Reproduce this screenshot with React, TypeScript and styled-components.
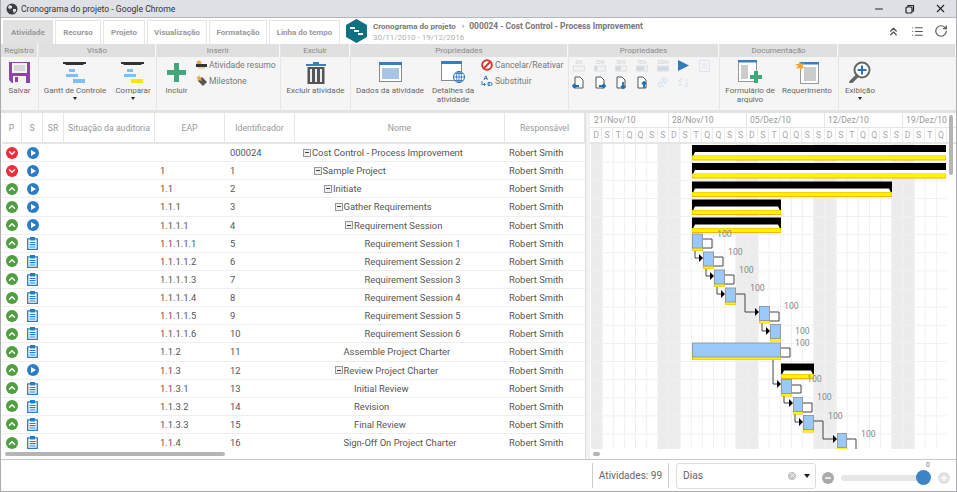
import React from "react";
import styled, { createGlobalStyle } from "styled-components";
import { ChevronsUp, List, RotateCw, Minus, X, Plus as PlusGlyph, ChevronUp, ChevronDown } from "lucide-react";

const Global = createGlobalStyle`
  html, body { margin: 0; padding: 0; height: 100%; overflow: hidden; background: #fff; }
  #root { height: 100%; }
  * { box-sizing: border-box; }
`;

const Shell = styled.div`
  width: 957px;
  height: 492px;
  display: flex;
  flex-direction: column;
  border: 1px solid #a9abad;
  border-top: 0;
  font-family: Roboto, "Liberation Sans", Arial, sans-serif;
  font-size: 9.4px;
  color: #666;
  overflow: hidden;
`;

const TitleBar = styled.div`
  height: 18px;
  flex: none;
  display: flex;
  align-items: center;
  background: #dee1e6;
  border-bottom: 1px solid #b5b7ba;
  padding-left: 5px;
  color: #333;
  font-size: 8.6px;
`;
const TitleText = styled.span`
  margin-left: 3px;
  flex: 1;
`;
const WinButton = styled.div`
  width: 31px;
  display: flex;
  justify-content: center;
  align-items: center;
  color: #222;
`;

const TopBar = styled.div`
  height: 26px;
  flex: none;
  display: flex;
  align-items: flex-end;
  background: #fff;
  padding-left: 2px;
`;
const Tab = styled.div<{ $active?: boolean; $w: number }>`
  width: ${(p) => p.$w}px;
  height: 24px;
  margin-right: 2px;
  display: flex;
  align-items: center;
  justify-content: center;
  font-weight: 700;
  font-size: 8px;
  color: #999;
  background: ${(p) => (p.$active ? "#e2e2e2" : "#fff")};
  border: 1px solid ${(p) => (p.$active ? "#e2e2e2" : "#e6e6e6")};
  border-bottom: 0;
  white-space: nowrap;
`;
const ProjectInfo = styled.div`
  flex: 1;
  align-self: stretch;
  display: flex;
  align-items: center;
  padding: 0 3px 0 4px;
`;
const ProjectText = styled.div`
  margin-left: 6px;
  flex: 1;
  line-height: 11px;
  padding-top: 1px;
`;
const Crumb = styled.div`
  font-weight: 700;
  font-size: 8.4px;
  color: #777;
  white-space: nowrap;
`;
const CrumbRoot = styled.span`
  font-size: 8px;
`;
const CrumbSep = styled.span`
  font-weight: 400;
  margin: 0 5px 0 6px;
`;
const Dates = styled.div`
  font-size: 8px;
  color: #b0b0b0;
`;
const TopAction = styled.div`
  width: 24px;
  display: flex;
  justify-content: center;
  color: #555;
`;

const Ribbon = styled.div`
  height: 69px;
  flex: none;
  display: flex;
  background: #f5f5f5;
  border-bottom: 3px solid #e2e2e2;
`;
const Group = styled.div<{ $w: number }>`
  width: ${(p) => p.$w}px;
  flex: none;
  display: flex;
  flex-direction: column;
  border-right: 1px solid #e6e6e6;
`;
const GroupTitle = styled.div`
  height: 13px;
  background: #e0e0e0;
  border-right: 1px solid #f8f8f8;
  text-align: center;
  line-height: 13px;
  font-size: 8px;
  color: #8a8a8a;
`;
const GroupBody = styled.div`
  flex: 1;
  display: flex;
  justify-content: flex-start;
`;
const BigButton = styled.div<{ $w: number }>`
  width: ${(p) => p.$w}px;
  flex: none;
  display: flex;
  flex-direction: column;
  align-items: center;
  padding-top: 3px;
  text-align: center;
  font-size: 8px;
  line-height: 9px;
  color: #666;
`;
const BigIcon = styled.div`
  height: 24px;
  display: flex;
  align-items: center;
  justify-content: center;
  svg { display: block; }
`;
const BigLabel = styled.div`
  margin-top: 2px;
  white-space: pre;
`;
const Caret = styled.div`
  width: 0;
  height: 0;
  margin-top: 2px;
  border-left: 2.5px solid transparent;
  border-right: 2.5px solid transparent;
  border-top: 3px solid #222;
`;
const SmallStack = styled.div<{ $w: number; $pad?: number }>`
  width: ${(p) => p.$w}px;
  flex: none;
  display: flex;
  flex-direction: column;
  gap: 4px;
  padding-top: 2px;
  padding-left: ${(p) => p.$pad || 0}px;
`;
const SmallItem = styled.div`
  height: 12px;
  display: flex;
  align-items: center;
  gap: 2px;
  font-size: 8.6px;
  color: #777;
  white-space: nowrap;
`;
const IconGrid = styled.div`
  display: grid;
  grid-template-columns: repeat(7, 21px);
  grid-auto-rows: 17px;
  justify-items: center;
  align-items: center;
  margin-left: -1px;
`;

const Main = styled.div`
  flex: 1;
  min-height: 0;
  display: flex;
`;
const GridPane = styled.div`
  width: 584px;
  flex: none;
  padding-left: 1px;
  display: flex;
  flex-direction: column;
`;
const Cols = "20px 21px 21px 91px 70px 70px 210px 80px";
const HeadRow = styled.div`
  height: 31px;
  flex: none;
  display: grid;
  grid-template-columns: ${Cols};
  border-bottom: 2px solid #e6e6e6;
`;
const HeadCell = styled.div`
  display: flex;
  align-items: center;
  justify-content: center;
  border-right: 1px solid #e6e6e6;
  font-size: 8.7px;
  color: #999;
  white-space: nowrap;
`;
const Rows = styled.div`
  height: 305px;
  overflow: hidden;
`;
const Row = styled.div`
  height: 18.125px;
  display: grid;
  grid-template-columns: ${Cols};
  border-bottom: 1px solid #eeeeee;
  color: #555;
  font-size: 9.4px;
  align-items: center;
`;
const IconCell = styled.div`
  display: flex;
  justify-content: center;
`;
const TextCell = styled.div<{ $pad: number }>`
  padding-left: ${(p) => p.$pad}px;
  white-space: nowrap;
`;
const NameCell = styled.div<{ $depth: number }>`
  display: flex;
  align-items: center;
  padding-left: ${(p) => 8 + p.$depth * 10.5}px;
  white-space: nowrap;
`;
const Expander = styled.span<{ $on: boolean }>`
  width: 8px;
  height: 8px;
  margin-right: 1px;
  flex: none;
  border: 1px solid ${(p) => (p.$on ? "#999" : "transparent")};
  background: ${(p) => (p.$on ? "linear-gradient(#444, #444) center / 4px 1px no-repeat, #efefef" : "none")};
`;
const HScroll = styled.div<{ $left: number }>`
  height: 10px;
  flex: none;
  padding: 3px 0 0 ${(p) => p.$left}px;
`;
const HThumb = styled.div<{ $w: number }>`
  width: ${(p) => p.$w}px;
  height: 4px;
  border-radius: 2px;
  background: #b5b5b5;
`;
const Splitter = styled.div`
  width: 5px;
  flex: none;
  background: #f2f2f2;
  border-left: 1px solid #ddd;
`;
const GanttPane = styled.div`
  flex: 1;
  min-width: 0;
  display: flex;
  flex-direction: column;
  position: relative;
  overflow: hidden;
`;
const MonthRow = styled.div`
  height: 15px;
  flex: none;
  display: flex;
  padding-left: 1px;
  border-bottom: 1px solid #e6e6e6;
`;
const Month = styled.div`
  width: 78px;
  flex: none;
  padding-left: 3px;
  line-height: 14px;
  font-size: 8.6px;
  color: #999;
  border-right: 1px solid #e6e6e6;
  white-space: nowrap;
`;
const DayRow = styled.div`
  height: 16px;
  flex: none;
  display: flex;
  padding-left: 1px;
  border-bottom: 2px solid #e6e6e6;
`;
const Day = styled.div`
  width: 11.14px;
  flex: none;
  text-align: center;
  line-height: 14px;
  font-size: 8.7px;
  color: #aaa;
  border-right: 1px solid #ececec;
`;
const GanttSvg = styled.svg`
  display: block;
  flex: none;
`;
const VThumb = styled.div`
  position: absolute;
  top: 2px;
  right: 3px;
  width: 4px;
  height: 60px;
  border-radius: 2px;
  background: #b5b5b5;
`;

const Footer = styled.div`
  height: 32px;
  flex: none;
  display: flex;
  align-items: center;
  border-top: 1px solid #c9c9c9;
  padding-left: 591px;
  background: #fff;
`;
const Count = styled.div`
  height: 25px;
  width: 77px;
  display: flex;
  align-items: center;
  justify-content: center;
  border-left: 1px solid #ccc;
  border-right: 1px solid #ccc;
  font-size: 10.1px;
  color: #666;
`;
const SelectBox = styled.div`
  width: 140px;
  height: 26px;
  margin-left: 7px;
  display: flex;
  align-items: center;
  padding: 0 5px 0 6px;
  border: 1px solid #ddd;
  border-radius: 3px;
  font-size: 10.2px;
  color: #666;
`;
const SelectText = styled.span`
  flex: 1;
`;
const ClearDot = styled.span`
  width: 8px;
  height: 8px;
  border-radius: 50%;
  background: #c4c4c4;
  margin-right: 8px;
  color: #fff;
  display: flex;
  align-items: center;
  justify-content: center;
`;
const DownTri = styled.span`
  width: 0;
  height: 0;
  border-left: 3.5px solid transparent;
  border-right: 3.5px solid transparent;
  border-top: 4px solid #222;
`;
const Zoom = styled.div`
  margin-left: 6px;
  display: flex;
  align-items: center;
  padding-top: 4px;
`;
const ZoomBtn = styled.div<{ $dim?: boolean }>`
  width: 12px;
  height: 12px;
  border-radius: 50%;
  background: ${(p) => (p.$dim ? "#e2e2e2" : "#aaa")};
  display: flex;
  align-items: center;
  justify-content: center;
  color: #fff;
`;
const Track = styled.div`
  width: 85px;
  height: 6px;
  margin: 0 12px 0 7px;
  border-radius: 3px;
  background: #e6e6e6;
  position: relative;
`;
const Thumb = styled.div`
  position: absolute;
  right: -5px;
  top: -5px;
  width: 15px;
  height: 15px;
  border-radius: 50%;
  background: #3d85c6;
`;
const ZoomValue = styled.div`
  position: absolute;
  right: -4px;
  top: -14px;
  font-size: 7px;
  color: #777;
`;

const Globe = () => (
  <svg width="12" height="12" viewBox="0 0 12 12">
    <circle cx="6" cy="6" r="5.5" fill="#3c4043" />
    <path d="M3 2l3 1 0 2-2 1-2-1zM7 6l3 0 0 2-2 2-1-2z" fill="#dee1e6" />
  </svg>
);
const Restore = () => (
  <svg width="10" height="10" viewBox="0 0 10 10" fill="none" stroke="#222" strokeWidth="1.2">
    <rect x="1" y="3" width="6" height="6" rx="1" />
    <path d="M3 3V1.5h5.5V7H7" />
  </svg>
);
const Hexagon = () => (
  <svg width="21" height="24" viewBox="0 0 21 24">
    <path d="M10.5 0L21 6v12l-10.500 6L0 18V6z" fill="#0e7080" />
    <path d="M4 8h5v2H4zM8 11h5v2H8zM12 14h5v2h-5z" fill="#fff" />
  </svg>
);
const Save = () => (
  <svg width="22" height="22" viewBox="0 0 22 22">
    <path d="M0 1h21v21H3l-3-3z" fill="#8e44ad" />
    <rect x="3" y="2" width="15" height="10" fill="#f2f2f2" />
    <path d="M5 5h11M5 7h11M5 9h11" stroke="#bbb" />
    <rect x="4" y="15" width="13" height="7" fill="#f2f2f2" />
    <rect x="6" y="16" width="3" height="5" fill="#8e44ad" />
  </svg>
);
const GanttIcon = ({ lastFill }: { lastFill: string }) => (
  <svg width="24" height="22" viewBox="0 0 24 22">
    <path d="M0 1h23v2h-2l-1 1H3L2 3H0z" fill="#333" />
    <rect x="6" y="8" width="6" height="3" fill="#7ec0f5" />
    <rect x="3" y="13" width="12" height="3" fill="#7ec0f5" />
    <rect x="10" y="18" width="12" height="4" fill={lastFill} />
  </svg>
);
const Plus = () => (
  <svg width="19" height="19" viewBox="0 0 19 19">
    <path d="M7 0h5v7h7v5h-7v7H7v-7H0V7h7z" fill="#41a87a" />
  </svg>
);
const SummaryIcon = () => (
  <svg width="11" height="10" viewBox="0 0 11 10">
    <circle cx="3" cy="3" r="2.500" fill="#e9a94a" />
    <path d="M0 4h11v3H0z" fill="#333" />
    <path d="M2 7h7v2H2z" fill="#e8d5a8" />
  </svg>
);
const MilestoneIcon = () => (
  <svg width="11" height="12" viewBox="0 0 11 12">
    <path d="M6 2l5 5-4 4-5-5z" fill="#555" />
    <path d="M3 0l1 2 2 0-1 2 1 2-3-1-2 1 1-2-2-2h2z" fill="#e9a94a" />
  </svg>
);
const Trash = () => (
  <svg width="20" height="23" viewBox="0 0 20 23">
    <path d="M0 3h20v2H0zM7 1h6v2H7z" fill="#3a7ebf" />
    <rect x="1.500" y="6" width="17" height="17" fill="#555" />
    <path d="M5 8v13M10 8v13M15 8v13" stroke="#eee" strokeWidth="2" />
  </svg>
);
const Form = () => (
  <svg width="23" height="20" viewBox="0 0 23 20">
    <rect x="0.500" y="0.500" width="22" height="19" fill="#fff" stroke="#888" />
    <rect x="0" y="0" width="23" height="3" fill="#3a7ebf" />
    <rect x="3" y="6" width="17" height="11" fill="#a8c4e6" />
  </svg>
);
const Details = () => (
  <svg width="24" height="22" viewBox="0 0 24 22">
    <rect x="0.500" y="0.500" width="20" height="19" fill="#fff" stroke="#888" />
    <rect x="0" y="0" width="21" height="3" fill="#3a7ebf" />
    <circle cx="18" cy="16" r="5.500" fill="#fff" stroke="#2a6fb5" />
    <path d="M12.500 16h11M18 10.500v11M14 12.500h8M14 19.500h8" stroke="#2a6fb5" strokeWidth="0.800" />
    <ellipse cx="18" cy="16" rx="2.500" ry="5.500" fill="none" stroke="#2a6fb5" strokeWidth="0.800" />
  </svg>
);
const Cancel = () => (
  <svg width="12" height="12" viewBox="0 0 12 12">
    <circle cx="6" cy="6" r="4.800" fill="#fff" stroke="#d0392b" strokeWidth="2" />
    <path d="M3 9l6-6" stroke="#d0392b" strokeWidth="2" />
  </svg>
);
const Replace = () => (
  <svg width="12" height="12" viewBox="0 0 12 12" fill="none" stroke="#2a6fb5" strokeWidth="0.900">
    <path d="M3 5l1.500-4h.5L6.500 5M3.500 3.500h2.500" />
    <path d="M7 7.500h2.500a1 1 0 0 1 0 3H7zM7 9h2" />
    <path d="M1 6v3.500h3M3 8l1.500 1.500L3 11" />
  </svg>
);
const Percent = ({ label, fill }: { label: string; fill: number }) => (
  <svg width="14" height="14" viewBox="0 0 14 14">
    <text x="7" y="4.500" fontSize="4.500" textAnchor="middle" fill="#ccc" fontFamily="Liberation Sans">{label}</text>
    <rect x="1.500" y="7" width="11" height="5" fill="#f2f2f2" stroke="#e0e0e0" />
    <rect x="2" y="7.500" width={10 * fill} height="4" fill="#cfd9e4" />
  </svg>
);
const DocArrow = ({ d }: { d: string }) => (
  <svg width="14" height="14" viewBox="0 0 14 14">
    <path d="M3 1h5l3 3v8H3z" fill="#fff" stroke="#555" />
    <path d={d} fill="none" stroke="#1f6db5" strokeWidth="1.800" />
  </svg>
);
const Play = () => (
  <svg width="11" height="11" viewBox="0 0 11 11">
    <path d="M0 0l11 5.500L0 11z" fill="#2f7bc4" />
  </svg>
);
const FadedClip = () => (
  <svg width="11" height="13" viewBox="0 0 11 13" fill="none" stroke="#dce6f0">
    <rect x="0.500" y="1.500" width="10" height="11" />
    <path d="M3 5h5M3 7h5M3 9h5" />
  </svg>
);
const FadedLink = ({ broken }: { broken?: boolean }) => (
  <svg width="11" height="11" viewBox="0 0 11 11" fill="none" stroke="#dce6f0" strokeWidth="1.500">
    <path d={broken ? "M1 9l2-2M8 4l2-2M4 1l-3 3 2 1M7 10l3-3-2-1" : "M4 7l3-3M1 8l2-3 3 4-3 1zM10 3L8 6 5 2l3-1z"} />
  </svg>
);
const FileForm = () => (
  <svg width="24" height="24" viewBox="0 0 24 24">
    <rect x="0.500" y="0.500" width="18" height="21" fill="#fff" stroke="#999" />
    <rect x="0" y="0" width="19" height="2.500" fill="#3a7ebf" />
    <rect x="3" y="5" width="7" height="14" fill="#ccc" />
    <path d="M16 11h4v4h4v4h-4v4h-4v-4h-4v-4h4z" fill="#41a87a" />
  </svg>
);
const Requirement = () => (
  <svg width="24" height="23" viewBox="0 0 24 23">
    <rect x="5.500" y="1.500" width="18" height="21" fill="#fff" stroke="#999" />
    <rect x="5" y="1" width="19" height="2.500" fill="#3a7ebf" />
    <rect x="9" y="6" width="12" height="14" fill="#ccc" />
    <path d="M5 0l1 3 3-1-1.500 3L10 6.500 7 7l-1 3-1.500-3L1 7.500 3 5 0 3l3.500 0z" fill="#f0a830" />
  </svg>
);
const Magnifier = () => (
  <svg width="22" height="22" viewBox="0 0 22 22">
    <circle cx="13" cy="9" r="7.500" fill="#fff" stroke="#666" strokeWidth="2" />
    <path d="M8 15l-6 6" stroke="#666" strokeWidth="3.500" strokeLinecap="round" />
    <path d="M13 4.500v9M8.500 9h9" stroke="#2a6fb5" strokeWidth="2" />
  </svg>
);

const RoundIcon = styled.span<{ $bg: string }>`
  width: 12px;
  height: 12px;
  border-radius: 50%;
  background: ${(p) => p.$bg};
  color: #fff;
  display: flex;
  align-items: center;
  justify-content: center;
`;
const PriorityIcon = ({ high }: { high: boolean }) => (
  <RoundIcon $bg={high ? "#ee2c3c" : "#4f9e3f"}>
    {high ? <ChevronDown size={10} strokeWidth={3.500} /> : <ChevronUp size={10} strokeWidth={3.500} />}
  </RoundIcon>
);
const RunIcon = () => (
  <RoundIcon $bg="#2a7cc7">
    <svg width="6" height="6" viewBox="0 0 6 6"><path d="M1 0l5 3-5 3z" fill="#fff" /></svg>
  </RoundIcon>
);
const ClipIcon = () => (
  <svg width="11" height="13" viewBox="0 0 11 13" fill="none" stroke="#2a7cc7" strokeWidth="1.300">
    <path d="M3 1.800H.7v10.500h9.600V1.800H8" />
    <rect x="3" y="0" width="5" height="3.500" fill="#2a7cc7" stroke="none" />
    <path d="M2.500 5.500h6M2.500 7.700h6M2.500 10h6" strokeWidth="1.200" />
  </svg>
);

const rows = [
  { high: true, run: true, eap: "", id: "000024", name: "Cost Control - Process Improvement", depth: 0, exp: true },
  { high: true, run: true, eap: "1", id: "1", name: "Sample Project", depth: 1, exp: true },
  { run: true, eap: "1.1", id: "2", name: "Initiate", depth: 2, exp: true },
  { run: true, eap: "1.1.1", id: "3", name: "Gather Requirements", depth: 3, exp: true },
  { run: true, eap: "1.1.1.1", id: "4", name: "Requirement Session", depth: 4, exp: true },
  { eap: "1.1.1.1.1", id: "5", name: "Requirement Session 1", depth: 5 },
  { eap: "1.1.1.1.2", id: "6", name: "Requirement Session 2", depth: 5 },
  { eap: "1.1.1.1.3", id: "7", name: "Requirement Session 3", depth: 5 },
  { eap: "1.1.1.1.4", id: "8", name: "Requirement Session 4", depth: 5 },
  { eap: "1.1.1.1.5", id: "9", name: "Requirement Session 5", depth: 5 },
  { eap: "1.1.1.1.6", id: "10", name: "Requirement Session 6", depth: 5 },
  { eap: "1.1.2", id: "11", name: "Assemble Project Charter", depth: 3 },
  { run: true, eap: "1.1.3", id: "12", name: "Review Project Charter", depth: 3, exp: true },
  { eap: "1.1.3.1", id: "13", name: "Initial Review", depth: 4 },
  { eap: "1.1.3.2", id: "14", name: "Revision", depth: 4 },
  { eap: "1.1.3.3", id: "15", name: "Final Review", depth: 4 },
  { eap: "1.1.4", id: "16", name: "Sign-Off On Project Charter", depth: 3 },
];

const dayW = 11.14;
const rowH = 18.125;
const letters = ["D", "S", "T", "Q", "Q", "S", "S"];
const days = Array.from({ length: 32 }, (_, i) => letters[i % 7]);

const summaries = [
  { x: 692, x2: 946, y: 145, open: true },
  { x: 692, x2: 946, y: 163, open: true },
  { x: 692, x2: 892, y: 181.500 },
  { x: 692, x2: 781, y: 199.500 },
  { x: 692, x2: 781, y: 217.500 },
  { x: 781, x2: 814, y: 363.500 },
];
const tasks = [
  { x: 692, x2: 703, y: 233.500 },
  { x: 703, x2: 714, y: 251.500 },
  { x: 714, x2: 725, y: 269.500 },
  { x: 725, x2: 736, y: 287.500 },
  { x: 759, x2: 770, y: 306 },
  { x: 770, x2: 781, y: 324 },
  { x: 692, x2: 781, y: 342.500 },
  { x: 781, x2: 792, y: 379 },
  { x: 793, x2: 803, y: 397 },
  { x: 803, x2: 814, y: 415 },
  { x: 837, x2: 847, y: 433 },
];
const links = [
  "M703 239H712V248H695V258H700",
  "M714 257H723V266H706V276H711",
  "M725 275H734V284H717V294H722",
  "M736 294H745V312H756",
  "M770 312H779V321H762V331H767",
  "M781 348H790V357H773V384H778",
  "M792 385H801V393H784V403H790",
  "M803 403H812V412H795V422H800",
  "M814 421H823V439H834",
  "M847 439H856V450",
];
const arrows = [[703, 258], [714, 276], [725, 294], [759, 312], [770, 331], [781, 384], [793, 403], [803, 422], [837, 439]];
const labels = [
  [717, 237], [728, 255], [739, 273], [750, 291], [784, 309], [795, 334], [795, 346], [807, 382], [817, 400], [828, 419], [861, 437],
];

const Gantt = () => (
  <GanttSvg width="357" height="305" viewBox="590 144 357 305">
    {[0, 1, 2, 3].map((w) => (
      <rect key={w} x={658 + w * 78} y="144" width="22.300" height="305" fill="#ececec" />
    ))}
    <rect x="591" y="144" width="11" height="305" fill="#ececec" />
    {days.map((_, i) => (
      <path key={i} d={`M${591 + (i + 1) * dayW} 144V449`} stroke="#f0f0f0" />
    ))}
    {rows.map((_, i) => (
      <path key={i} d={`M590 ${144 + (i + 1) * rowH}H947`} stroke="#f0f0f0" />
    ))}
    {links.map((d) => (
      <path key={d} d={d} fill="none" stroke="#444" strokeWidth="1" />
    ))}
    {arrows.map(([x, y]) => (
      <path key={`${x}-${y}`} d={`M${x - 4} ${y - 4}L${x} ${y}L${x - 4} ${y + 4}z`} fill="#000" />
    ))}
    {summaries.map((s) => (
      <g key={s.y}>
        <rect x={s.x} y={s.y + 7} width={s.x2 - s.x} height="3.500" fill="#fff" />
        <path
          d={
            s.open
              ? `M${s.x} ${s.y}H${s.x2}V${s.y + 7}H${s.x + 3}L${s.x + 1} ${s.y + 11}H${s.x}z`
              : `M${s.x} ${s.y}H${s.x2}V${s.y + 11}H${s.x2 - 1}L${s.x2 - 3} ${s.y + 7}H${s.x + 3}L${s.x + 1} ${s.y + 11}H${s.x}z`
          }
          fill="#000"
        />
        <rect x={s.x} y={s.y + 10.500} width={s.x2 - s.x} height="5" fill="#ffb000" />
        <rect x={s.x + 0.500} y={s.y + 11} width={s.x2 - s.x - 1} height="3.500" fill="#fff500" />
      </g>
    ))}
    {tasks.map((t) => (
      <g key={t.y}>
        <rect x={t.x} y={t.y + 14} width={t.x2 - t.x} height="3.500" fill="#ffb000" />
        <rect x={t.x + 0.500} y={t.y + 14.500} width={t.x2 - t.x - 1} height="2.500" fill="#fff500" />
        <rect x={t.x + 0.500} y={t.y + 0.500} width={t.x2 - t.x - 1} height="14" fill="#99c9fb" stroke="#9a9a9a" />
      </g>
    ))}
    {labels.map(([x, y]) => (
      <text key={`${x}-${y}`} x={x} y={y} fontSize="8.700" fill="#888" fontFamily="Roboto">100</text>
    ))}
  </GanttSvg>
);

export default function App() {
  return (
    <Shell>
      <Global />
      <TitleBar>
        <Globe />
        <TitleText>Cronograma do projeto - Google Chrome</TitleText>
        <WinButton><Minus size={12} /></WinButton>
        <WinButton><Restore /></WinButton>
        <WinButton><X size={13} /></WinButton>
      </TitleBar>

      <TopBar>
        <Tab $active $w={50}>Atividade</Tab>
        <Tab $w={46}>Recurso</Tab>
        <Tab $w={42}>Projeto</Tab>
        <Tab $w={60}>Visualização</Tab>
        <Tab $w={58}>Formatação</Tab>
        <Tab $w={71}>Linha do tempo</Tab>
        <ProjectInfo>
          <Hexagon />
          <ProjectText>
            <Crumb><CrumbRoot>Cronograma do projeto</CrumbRoot><CrumbSep>›</CrumbSep>000024 - Cost Control - Process Improvement</Crumb>
            <Dates>30/11/2010 - 19/12/2016</Dates>
          </ProjectText>
          <TopAction><ChevronsUp size={13} strokeWidth={2.500} /></TopAction>
          <TopAction><List size={13} /></TopAction>
          <TopAction><RotateCw size={14} /></TopAction>
        </ProjectInfo>
      </TopBar>

      <Ribbon>
        <Group $w={38}>
          <GroupTitle>Registro</GroupTitle>
          <GroupBody>
            <BigButton $w={37}><BigIcon><Save /></BigIcon><BigLabel>Salvar</BigLabel></BigButton>
          </GroupBody>
        </Group>
        <Group $w={118}>
          <GroupTitle>Visão</GroupTitle>
          <GroupBody>
            <BigButton $w={72}><BigIcon><GanttIcon lastFill="#7ec0f5" /></BigIcon><BigLabel>Gantt de Controle</BigLabel><Caret /></BigButton>
            <BigButton $w={44}><BigIcon><GanttIcon lastFill="#f6e600" /></BigIcon><BigLabel>Comparar</BigLabel><Caret /></BigButton>
          </GroupBody>
        </Group>
        <Group $w={124}>
          <GroupTitle>Inserir</GroupTitle>
          <GroupBody>
            <BigButton $w={39}><BigIcon><Plus /></BigIcon><BigLabel>Incluir</BigLabel></BigButton>
            <SmallStack $w={84}>
              <SmallItem><SummaryIcon />Atividade resumo</SmallItem>
              <SmallItem><MilestoneIcon />Milestone</SmallItem>
            </SmallStack>
          </GroupBody>
        </Group>
        <Group $w={70}>
          <GroupTitle>Excluir</GroupTitle>
          <GroupBody>
            <BigButton $w={69}><BigIcon><Trash /></BigIcon><BigLabel>Excluir atividade</BigLabel></BigButton>
          </GroupBody>
        </Group>
        <Group $w={218}>
          <GroupTitle>Propriedades</GroupTitle>
          <GroupBody>
            <BigButton $w={78}><BigIcon><Form /></BigIcon><BigLabel>Dados da atividade</BigLabel></BigButton>
            <BigButton $w={48}><BigIcon><Details /></BigIcon><BigLabel>{"Detalhes da\natividade"}</BigLabel></BigButton>
            <SmallStack $w={88} $pad={4}>
              <SmallItem><Cancel />Cancelar/Reativar</SmallItem>
              <SmallItem><Replace />Substituir</SmallItem>
            </SmallStack>
          </GroupBody>
        </Group>
        <Group $w={151}>
          <GroupTitle>Propriedades</GroupTitle>
          <GroupBody>
            <IconGrid>
              <Percent label="0%" fill={0} />
              <Percent label="25%" fill={0.25} />
              <Percent label="50%" fill={0.5} />
              <Percent label="75%" fill={0.75} />
              <Percent label="100%" fill={1} />
              <Play />
              <FadedClip />
              <DocArrow d="M7 10H1M3 8L1 10l2 2" />
              <DocArrow d="M6 10h6M10 8l2 2-2 2" />
              <DocArrow d="M9 6v6M7 10l2 2 2-2" />
              <DocArrow d="M9 12V6M7 8l2-2 2 2" />
              <FadedLink />
              <FadedLink broken />
            </IconGrid>
          </GroupBody>
        </Group>
        <Group $w={119}>
          <GroupTitle>Documentação</GroupTitle>
          <GroupBody>
            <BigButton $w={60}><BigIcon><FileForm /></BigIcon><BigLabel>{"Formulário de\narquivo"}</BigLabel></BigButton>
            <BigButton $w={54}><BigIcon><Requirement /></BigIcon><BigLabel>Requerimento</BigLabel></BigButton>
          </GroupBody>
        </Group>
        <Group $w={118}>
          <GroupTitle>&nbsp;</GroupTitle>
          <GroupBody>
            <BigButton $w={42}><BigIcon><Magnifier /></BigIcon><BigLabel>Exibição</BigLabel><Caret /></BigButton>
          </GroupBody>
        </Group>
      </Ribbon>

      <Main>
        <GridPane>
          <HeadRow>
            <HeadCell>P</HeadCell>
            <HeadCell>S</HeadCell>
            <HeadCell>SR</HeadCell>
            <HeadCell>Situação da auditoria</HeadCell>
            <HeadCell>EAP</HeadCell>
            <HeadCell>Identificador</HeadCell>
            <HeadCell>Nome</HeadCell>
            <HeadCell>Responsável</HeadCell>
          </HeadRow>
          <Rows>
            {rows.map((r) => (
              <Row key={r.id}>
                <IconCell><PriorityIcon high={!!r.high} /></IconCell>
                <IconCell>{r.run ? <RunIcon /> : <ClipIcon />}</IconCell>
                <span />
                <span />
                <TextCell $pad={5}>{r.eap}</TextCell>
                <TextCell $pad={5}>{r.id}</TextCell>
                <NameCell $depth={r.depth}>
                  <Expander $on={!!r.exp} />
                  {r.name}
                </NameCell>
                <TextCell $pad={4}>Robert Smith</TextCell>
              </Row>
            ))}
          </Rows>
          <HScroll $left={3}><HThumb $w={220} /></HScroll>
        </GridPane>
        <Splitter />
        <GanttPane>
          <MonthRow>
            {["21/Nov/10", "28/Nov/10", "05/Dez/10", "12/Dez/10", "19/Dez/10"].map((m) => (
              <Month key={m}>{m}</Month>
            ))}
          </MonthRow>
          <DayRow>
            {days.map((d, i) => (
              <Day key={i}>{d}</Day>
            ))}
          </DayRow>
          <Gantt />
          <HScroll $left={3}><HThumb $w={7} /></HScroll>
          <VThumb />
        </GanttPane>
      </Main>

      <Footer>
        <Count>Atividades: 99</Count>
        <SelectBox>
          <SelectText>Dias</SelectText>
          <ClearDot><X size={7} strokeWidth={3} /></ClearDot>
          <DownTri />
        </SelectBox>
        <Zoom>
          <ZoomBtn><Minus size={8} strokeWidth={4} /></ZoomBtn>
          <Track>
            <Thumb />
            <ZoomValue>0</ZoomValue>
          </Track>
          <ZoomBtn $dim><PlusGlyph size={8} strokeWidth={4} /></ZoomBtn>
        </Zoom>
      </Footer>
    </Shell>
  );
}
